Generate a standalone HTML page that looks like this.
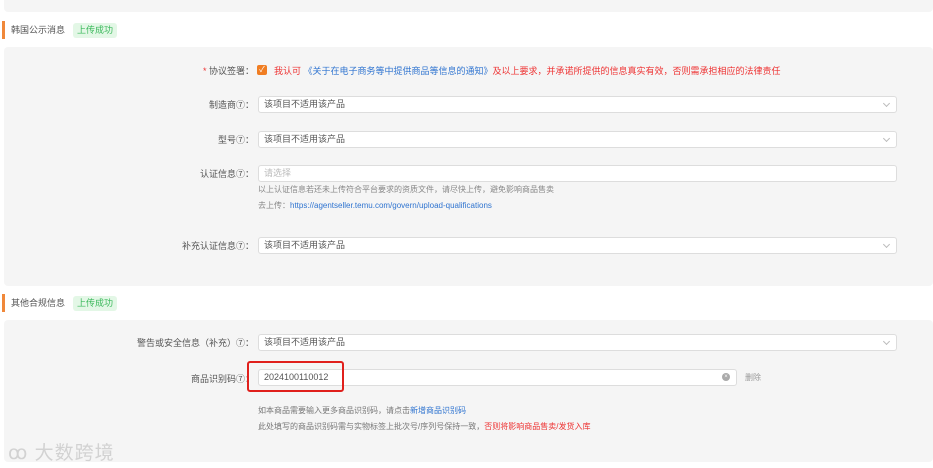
<!DOCTYPE html>
<html><head><meta charset="utf-8"><style>
*{margin:0;padding:0;box-sizing:border-box}
body{width:933px;height:468px;background:#fff;font-family:"Liberation Sans","Noto Sans CJK SC",sans-serif;font-size:9px;color:#333;position:relative;overflow:hidden}
.a{position:absolute}
.panel{position:absolute;background:#f5f5f5;border-radius:4px}
.hdr{position:absolute;left:2px;height:18px;border-left:3px solid #f0883a;padding-left:6px;line-height:18px;font-size:9px;color:#555}
.tag{display:inline-block;background:#e3f7e6;color:#3ab85a;border-radius:3px;padding:0 4px;margin-left:8px;line-height:15px}
.lbl{position:absolute;right:679px;font-size:9px;color:#555;white-space:nowrap}
.inp{position:absolute;left:258px;width:639px;height:17px;background:#fff;border:1px solid #ddd;border-radius:3px;padding-left:5px;line-height:15px;color:#555;font-size:9px}
.chev{position:absolute;right:7px;top:4px;width:5px;height:5px;border-right:1px solid #bbb;border-bottom:1px solid #bbb;transform:rotate(45deg)}
.help{position:absolute;left:258px;color:#888;font-size:8px;line-height:16px}
</style></head><body>
<div class="panel" style="left:4px;top:-4px;width:929px;height:16px"></div>
<div class="hdr" style="top:21px">韩国公示消息<span class="tag">上传成功</span></div>
<div class="panel" style="left:4px;top:47px;width:929px;height:239px"></div>

<div class="lbl" style="top:64px"><span style="color:#e33">*</span> 协议签署：</div>
<div class="a" style="left:257px;top:65px;width:10px;height:10px;background:#f07d22;border-radius:2px;color:#fff;font-size:8px;line-height:10px;text-align:center">✓</div>
<div class="a" style="left:274px;top:64px;font-size:9px;white-space:nowrap"><span style="color:#e33">我认可</span> <span style="color:#2f74d0">《关于在电子商务等中提供商品等信息的通知》</span><span style="color:#e33">及以上要求，并承诺所提供的信息真实有效，否则需承担相应的法律责任</span></div>

<div class="lbl" style="top:98px">制造商⑦：</div>
<div class="inp" style="top:96px">该项目不适用该产品<div class="chev"></div></div>
<div class="lbl" style="top:133px">型号⑦：</div>
<div class="inp" style="top:131px">该项目不适用该产品<div class="chev"></div></div>
<div class="lbl" style="top:167px">认证信息⑦：</div>
<div class="inp" style="top:165px;color:#bbb">请选择</div>
<div class="help" style="top:182px">以上认证信息若还未上传符合平台要求的资质文件，请尽快上传，避免影响商品售卖<br>去上传：<span style="color:#2f74d0">https://agentseller.temu.com/govern/upload-qualifications</span></div>
<div class="lbl" style="top:239px">补充认证信息⑦：</div>
<div class="inp" style="top:237px">该项目不适用该产品<div class="chev"></div></div>

<div class="hdr" style="top:294px">其他合规信息<span class="tag">上传成功</span></div>
<div class="panel" style="left:4px;top:320px;width:929px;height:142px"></div>
<div class="lbl" style="top:336px">警告或安全信息（补充）⑦：</div>
<div class="inp" style="top:334px">该项目不适用该产品<div class="chev"></div></div>
<div class="lbl" style="top:372px">商品识别码⑦：</div>
<div class="inp" style="top:369px;width:479px">2024100110012<div class="a" style="right:6px;top:3px;width:8px;height:8px;border-radius:50%;background:#aaa;color:#fff;font-size:6px;line-height:8px;text-align:center">×</div></div>
<div class="a" style="left:745px;top:372px;color:#999;font-size:8px">删除</div>
<div class="a" style="left:247px;top:361px;width:97px;height:31px;border:2px solid #e0201c;border-radius:3px"></div>
<div class="help" style="top:403px;color:#777">如本商品需要输入更多商品识别码，请点击<span style="color:#2f74d0">新增商品识别码</span><br>此处填写的商品识别码需与实物标签上批次号/序列号保持一致，<span style="color:#e33">否则将影响商品售卖/发货入库</span></div>
<div class="a" style="left:8px;top:438px;color:#d2d2d2;font-size:19px;letter-spacing:1px">ꝏ 大数跨境</div>
</body></html>
